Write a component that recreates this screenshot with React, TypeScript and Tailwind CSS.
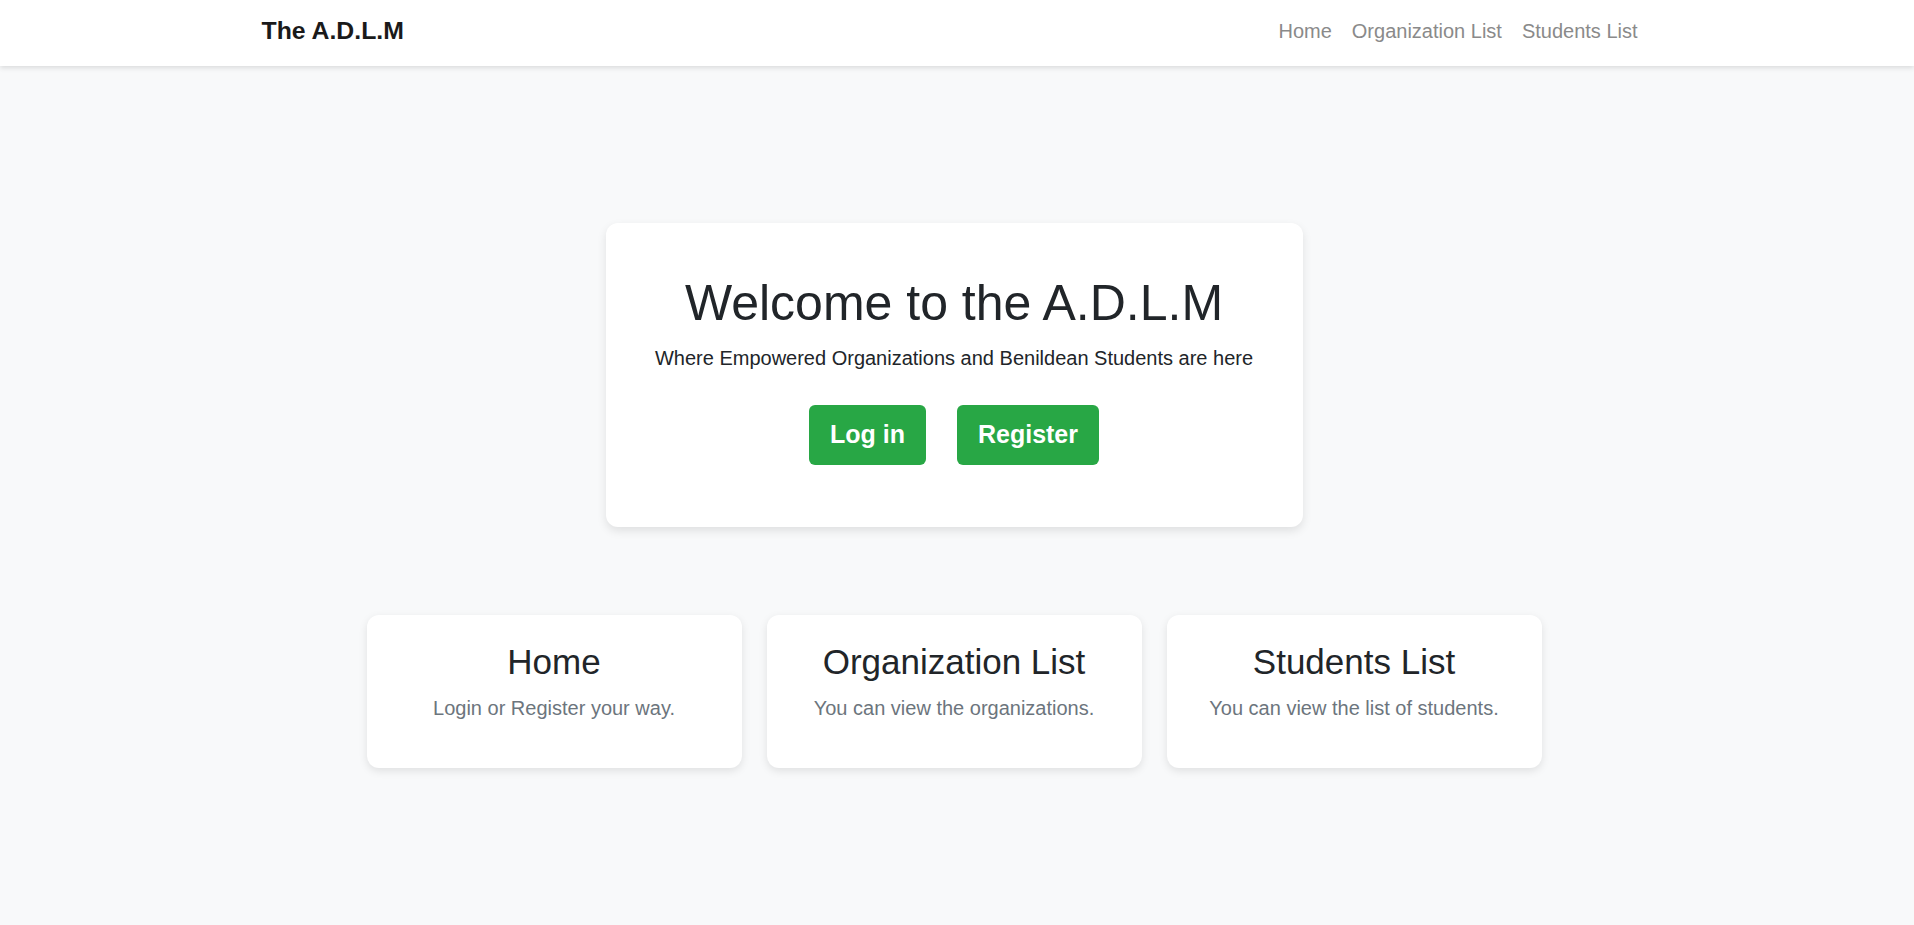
import React from "react";

const font = { fontFamily: '"Liberation Sans", Arial, sans-serif' };

function InfoCard({ title, text }: { title: string; text: string }) {
  return (
    <div className="w-[375px] h-[153px] bg-white rounded-[12px] shadow-[0_3px_8px_rgba(0,0,0,0.1)] pt-[26px] px-[20px] text-center">
      <h3 className="text-[35px] leading-[42px] text-[#212529] mb-[10px]">{title}</h3>
      <p className="text-[20px] leading-[30px] text-[#6c757d]">{text}</p>
    </div>
  );
}

export default function App() {
  return (
    <div style={font} className="min-h-screen bg-[#f8f9fa]">
      <nav className="h-[66px] bg-white shadow-[0_2px_5px_rgba(0,0,0,0.12)] relative z-10">
        <div className="w-[1425px] mx-auto px-[17px] h-full flex items-center justify-between pb-[4px]">
          <span className="text-[24.8px] font-bold text-[#1a1a1a]">The A.D.L.M</span>
          <div className="flex items-center text-[20px] leading-[30px] text-[#8a8a8a] mr-[10px] pb-[1px]">
            <a className="px-[10px]">Home</a>
            <a className="px-[10px]">Organization List</a>
            <a className="pl-[10px] pr-[5px]">Students List</a>
          </div>
        </div>
      </nav>
      <main className="flex flex-col items-center pr-[6px] pt-[157px] pb-[80px]">
        <div className="w-[697px] bg-white rounded-[12px] shadow-[0_4px_10px_rgba(0,0,0,0.1)] pt-[50px] pb-[62px] text-center">
          <h1 className="text-[50px] leading-[60px] text-[#212529] mb-[10px]">Welcome to the A.D.L.M</h1>
          <p className="text-[20px] leading-[30px] text-[#212529]">
            Where Empowered Organizations and Benildean Students are here
          </p>
          <div className="mt-[32px] flex justify-center gap-[31px]">
            <button className="h-[60px] w-[117px] rounded-[6px] bg-[#28a745] text-white font-bold text-[25px]">Log in</button>
            <button className="h-[60px] w-[142px] rounded-[6px] bg-[#28a745] text-white font-bold text-[25px]">Register</button>
          </div>
        </div>
        <div className="mt-[88px] flex gap-[25px]">
          <InfoCard title="Home" text="Login or Register your way." />
          <InfoCard title="Organization List" text="You can view the organizations." />
          <InfoCard title="Students List" text="You can view the list of students." />
        </div>
      </main>
    </div>
  );
}
